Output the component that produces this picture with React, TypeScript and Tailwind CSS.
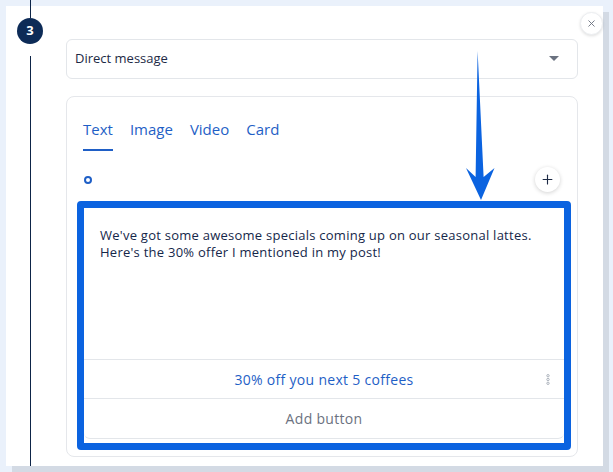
import { Plus, X } from "lucide-react";

const tabs = ["Text", "Image", "Video", "Card"];

const App = () => {
  return (
    <div
      className="w-[613px] h-[472px] overflow-hidden bg-[#eaf1fb] pt-[6px] pl-[6px]"
      style={{ fontFamily: '"Open Sans", "Noto Sans", sans-serif' }}
    >
      <div className="relative flex w-[597px] h-[460px] bg-white shadow-[6px_6px_0_#d3dae4]">
        {/* timeline */}
        <div className="flex w-[48px] flex-col items-center -mt-[6px]">
          <div className="h-[18px] w-px bg-[#0d2447]" />
          <div className="flex h-[26px] w-[26px] items-center justify-center rounded-full bg-[#0d2b57] text-[13px] font-bold text-white">
            3
          </div>
          <div className="mt-[12px] w-px flex-1 bg-[#0d2447]" />
        </div>

        {/* content */}
        <div className="ml-[12px] flex w-[512px] flex-col pt-[33px]">
          <div className="flex h-[40px] items-center justify-between rounded-md border border-[#e3e6ea] pl-[8px] pr-[18px]">
            <span className="text-[13px] text-[#1d2a45]">Direct message</span>
            <svg width="10" height="6" viewBox="0 0 10 6">
              <path d="M0 0h10L5 5z" fill="#6b7280" />
            </svg>
          </div>

          <div className="mt-[17px] h-[361px] rounded-lg border border-[#e5e7eb] pt-[21px]">
            <div className="flex gap-[17px] pl-[16px]">
              {tabs.map((t, i) => (
                <div key={t} className="flex flex-col">
                  <span className="text-[15px] leading-[22px] text-[#1f5fc6]">{t}</span>
                  <div className={i === 0 ? "mt-[9px] h-[2px] bg-[#1f5fc6]" : "mt-[9px] h-[2px]"} />
                </div>
              ))}
            </div>

            <div className="mt-[16px] flex items-center justify-between pl-[17px] pr-[17px]">
              <div className="h-[8px] w-[8px] rounded-full border-2 border-[#1f5fc6]" />
              <div className="flex h-[25px] w-[25px] items-center justify-center rounded-full bg-white shadow-[0_1px_4px_rgba(0,0,0,0.18)]">
                <Plus size={15} strokeWidth={1.8} color="#1d2a45" />
              </div>
            </div>

            <div className="ml-[10px] mt-[9px] w-[494px] rounded-[4px] border-[7px] border-[#0b63e0] pb-[4px]">
              <div className="rounded-b-md border-b border-[#e3e6ea]">
                <div className="h-[151px] px-[16px] pt-[19px] text-[13px] leading-[17px] tracking-[0.25px] text-[#15274a]">
                  We've got some awesome specials coming up on our seasonal lattes.
                  <br />
                  Here's the 30% offer I mentioned in my post!
                </div>
                <div className="relative flex h-[39px] items-center justify-center border-t border-[#e3e6ea] text-[14px] tracking-[0.3px] text-[#1f5fc6]">
                  30% off you next 5 coffees
                  <svg className="absolute right-[14px]" width="4" height="11" viewBox="0 0 4 11">
                    <circle cx="2" cy="1.7" r="1.2" fill="none" stroke="#9ca3af" strokeWidth="0.8" />
                    <circle cx="2" cy="5.5" r="1.2" fill="none" stroke="#9ca3af" strokeWidth="0.8" />
                    <circle cx="2" cy="9.3" r="1.2" fill="none" stroke="#9ca3af" strokeWidth="0.8" />
                  </svg>
                </div>
                <div className="flex h-[40px] items-center justify-center border-t border-[#e3e6ea] text-[14px] tracking-[0.3px] text-[#6b7280]">
                  Add button
                </div>
              </div>
            </div>
          </div>
        </div>

        {/* close */}
        <div className="absolute right-[0px] top-[6px] flex h-[23px] w-[23px] items-center justify-center rounded-full border border-[#eceef1] bg-white shadow-[0_1px_3px_rgba(0,0,0,0.12)]">
          <X size={11} strokeWidth={2} color="#6b7280" />
        </div>

        {/* annotation arrow */}
        <svg className="absolute left-[0px] top-[0px]" width="597" height="460" viewBox="6 6 597 460">
          <polygon
            points="477.6,51 483.6,177 494.5,168 481,200 466,168 475.6,177"
            fill="#0b63e0"
          />
        </svg>
      </div>
    </div>
  );
};

export default App;
